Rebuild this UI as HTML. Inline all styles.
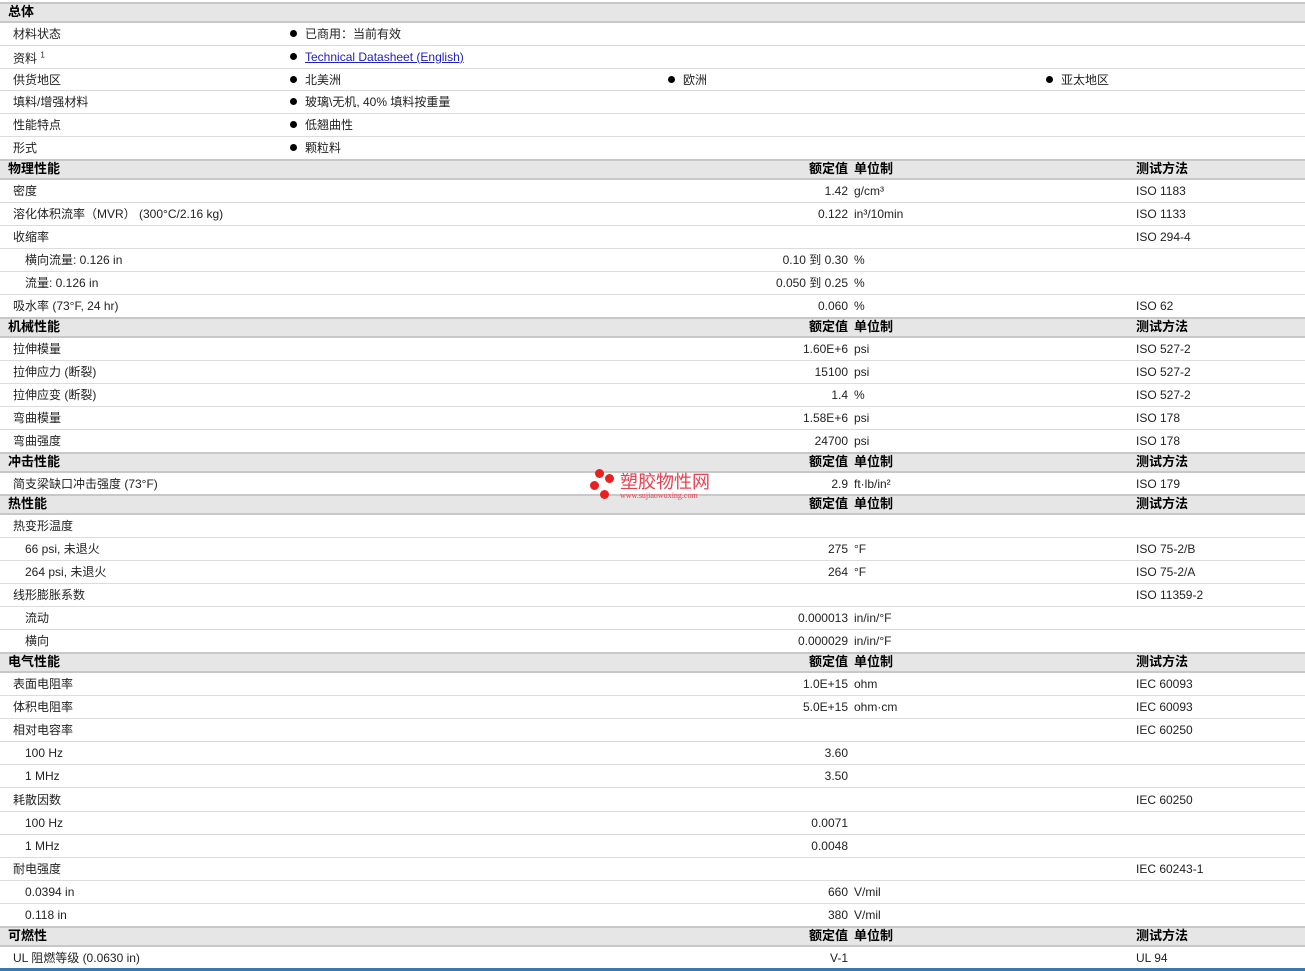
<!DOCTYPE html><html><head><meta charset="utf-8"><style>
*{margin:0;padding:0;box-sizing:border-box}
body{width:1305px;height:971px;background:#fff;font-family:"Liberation Sans","Noto Sans CJK SC",sans-serif;font-size:12px;color:#222;position:relative;overflow:hidden}
.sec{position:absolute;left:0;width:1305px;display:flex;flex-direction:column}
.h{height:21px;flex:none;background:#e6e6e6;border-top:2px solid #c8c8c8;border-bottom:2px solid #c8c8c8;position:relative;font-weight:bold;font-size:13px;color:#000}
.h .c{top:45%}
.r{flex:1;position:relative;border-bottom:1px solid #dcdcdc}
.r:last-child{border-bottom:none}
.c{position:absolute;top:50%;transform:translateY(-50%);white-space:nowrap;line-height:14px}
.l{left:13px}.s{left:25px}
.b{left:290px}.b:before{content:"";display:inline-block;width:7px;height:7px;border-radius:50%;background:#000;margin-right:8px;vertical-align:1px}
.v{right:457px;text-align:right}
.u{left:854px}.t{left:1136px}
.hl{left:8px}.hv{right:457px}.hu{left:854px}.ht{left:1136px}
a{color:#2020c0;text-decoration:underline}
</style></head><body>
<div class="sec" style="top:2px;height:157px">
<div class="h"><span class="c hl">总体</span></div>
<div class="r"><span class="c l">材料状态</span><span class="c b">已商用：当前有效</span></div>
<div class="r"><span class="c l">资料 <sup style="font-size:8px">1</sup></span><span class="c b"><a>Technical Datasheet (English)</a></span></div>
<div class="r"><span class="c l">供货地区</span><span class="c b">北美洲</span><span class="c b" style="left:668px">欧洲</span><span class="c b" style="left:1046px">亚太地区</span></div>
<div class="r"><span class="c l">填料/增强材料</span><span class="c b">玻璃\无机, 40% 填料按重量</span></div>
<div class="r"><span class="c l">性能特点</span><span class="c b">低翘曲性</span></div>
<div class="r"><span class="c l">形式</span><span class="c b">颗粒料</span></div>
</div>
<div class="sec" style="top:159px;height:158px">
<div class="h"><span class="c hl">物理性能</span><span class="c hv">额定值</span><span class="c hu">单位制</span><span class="c ht">测试方法</span></div>
<div class="r"><span class="c l">密度</span><span class="c v">1.42</span><span class="c u">g/cm³</span><span class="c t">ISO 1183</span></div>
<div class="r"><span class="c l">溶化体积流率（MVR） (300°C/2.16 kg)</span><span class="c v">0.122</span><span class="c u">in³/10min</span><span class="c t">ISO 1133</span></div>
<div class="r"><span class="c l">收缩率</span><span class="c t">ISO 294-4</span></div>
<div class="r"><span class="c s">横向流量: 0.126 in</span><span class="c v">0.10 到 0.30</span><span class="c u">%</span></div>
<div class="r"><span class="c s">流量: 0.126 in</span><span class="c v">0.050 到 0.25</span><span class="c u">%</span></div>
<div class="r"><span class="c l">吸水率 (73°F, 24 hr)</span><span class="c v">0.060</span><span class="c u">%</span><span class="c t">ISO 62</span></div>
</div>
<div class="sec" style="top:317px;height:135px">
<div class="h"><span class="c hl">机械性能</span><span class="c hv">额定值</span><span class="c hu">单位制</span><span class="c ht">测试方法</span></div>
<div class="r"><span class="c l">拉伸模量</span><span class="c v">1.60E+6</span><span class="c u">psi</span><span class="c t">ISO 527-2</span></div>
<div class="r"><span class="c l">拉伸应力 (断裂)</span><span class="c v">15100</span><span class="c u">psi</span><span class="c t">ISO 527-2</span></div>
<div class="r"><span class="c l">拉伸应变 (断裂)</span><span class="c v">1.4</span><span class="c u">%</span><span class="c t">ISO 527-2</span></div>
<div class="r"><span class="c l">弯曲模量</span><span class="c v">1.58E+6</span><span class="c u">psi</span><span class="c t">ISO 178</span></div>
<div class="r"><span class="c l">弯曲强度</span><span class="c v">24700</span><span class="c u">psi</span><span class="c t">ISO 178</span></div>
</div>
<div class="sec" style="top:452px;height:42px">
<div class="h"><span class="c hl">冲击性能</span><span class="c hv">额定值</span><span class="c hu">单位制</span><span class="c ht">测试方法</span></div>
<div class="r"><span class="c l">简支梁缺口冲击强度 (73°F)</span><span class="c v">2.9</span><span class="c u">ft·lb/in²</span><span class="c t">ISO 179</span></div>
</div>
<div class="sec" style="top:494px;height:158px">
<div class="h"><span class="c hl">热性能</span><span class="c hv">额定值</span><span class="c hu">单位制</span><span class="c ht">测试方法</span></div>
<div class="r"><span class="c l">热变形温度</span></div>
<div class="r"><span class="c s">66 psi, 未退火</span><span class="c v">275</span><span class="c u">°F</span><span class="c t">ISO 75-2/B</span></div>
<div class="r"><span class="c s">264 psi, 未退火</span><span class="c v">264</span><span class="c u">°F</span><span class="c t">ISO 75-2/A</span></div>
<div class="r"><span class="c l">线形膨胀系数</span><span class="c t">ISO 11359-2</span></div>
<div class="r"><span class="c s">流动</span><span class="c v">0.000013</span><span class="c u">in/in/°F</span></div>
<div class="r"><span class="c s">横向</span><span class="c v">0.000029</span><span class="c u">in/in/°F</span></div>
</div>
<div class="sec" style="top:652px;height:274px">
<div class="h"><span class="c hl">电气性能</span><span class="c hv">额定值</span><span class="c hu">单位制</span><span class="c ht">测试方法</span></div>
<div class="r"><span class="c l">表面电阻率</span><span class="c v">1.0E+15</span><span class="c u">ohm</span><span class="c t">IEC 60093</span></div>
<div class="r"><span class="c l">体积电阻率</span><span class="c v">5.0E+15</span><span class="c u">ohm·cm</span><span class="c t">IEC 60093</span></div>
<div class="r"><span class="c l">相对电容率</span><span class="c t">IEC 60250</span></div>
<div class="r"><span class="c s">100 Hz</span><span class="c v">3.60</span></div>
<div class="r"><span class="c s">1 MHz</span><span class="c v">3.50</span></div>
<div class="r"><span class="c l">耗散因数</span><span class="c t">IEC 60250</span></div>
<div class="r"><span class="c s">100 Hz</span><span class="c v">0.0071</span></div>
<div class="r"><span class="c s">1 MHz</span><span class="c v">0.0048</span></div>
<div class="r"><span class="c l">耐电强度</span><span class="c t">IEC 60243-1</span></div>
<div class="r"><span class="c s">0.0394 in</span><span class="c v">660</span><span class="c u">V/mil</span></div>
<div class="r"><span class="c s">0.118 in</span><span class="c v">380</span><span class="c u">V/mil</span></div>
</div>
<div class="sec" style="top:926px;height:42px">
<div class="h"><span class="c hl">可燃性</span><span class="c hv">额定值</span><span class="c hu">单位制</span><span class="c ht">测试方法</span></div>
<div class="r"><span class="c l">UL 阻燃等级 (0.0630 in)</span><span class="c v">V-1</span><span class="c t">UL 94</span></div>
</div>
<div style="position:absolute;left:0;top:968px;width:1305px;height:3px;background:#3a78b0"></div>
<div style="position:absolute;left:590px;top:468px;width:130px;height:34px">
<div style="position:absolute;left:5px;top:1px;width:9px;height:9px;border-radius:50%;background:#e82020"></div>
<div style="position:absolute;left:15px;top:6px;width:9px;height:9px;border-radius:50%;background:#e82020"></div>
<div style="position:absolute;left:0px;top:13px;width:9px;height:9px;border-radius:50%;background:#e82020"></div>
<div style="position:absolute;left:10px;top:22px;width:9px;height:9px;border-radius:50%;background:#e82020"></div>
<div style="position:absolute;left:30px;top:5px;font-size:18px;color:#e84050;line-height:18px">塑胶物性网</div>
<div style="position:absolute;left:30px;top:23px;font-size:8px;color:#e84050;font-family:'Liberation Serif',serif">www.sujiaowuxing.com</div>
</div>
</body></html>
